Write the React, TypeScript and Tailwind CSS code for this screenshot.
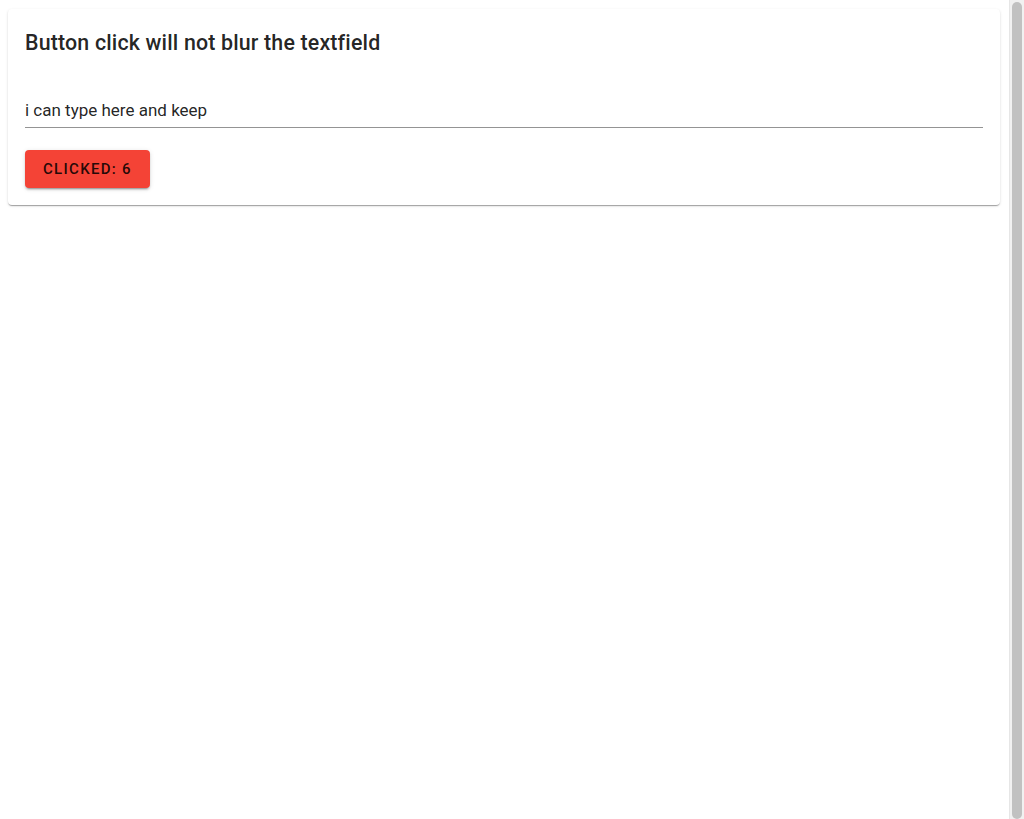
import React, { useState } from 'react';

const App: React.FC = () => {
  const [count, setCount] = useState(6);
  const [text, setText] = useState('i can type here and keep');

  return (
    <div className="h-[819px] flex overflow-hidden bg-white font-['Roboto',sans-serif]">
      <div className="flex-1 pt-[9px] pl-2 pr-[9px]">
        <div className="bg-white rounded px-[17px] pt-[17px] pb-[17px] shadow-[0_2px_1px_-1px_rgba(0,0,0,0.2),0_1px_1px_0_rgba(0,0,0,0.14),0_1px_3px_0_rgba(0,0,0,0.12)]">
          <h6 className="text-[21.4px] font-medium leading-[34px] tracking-[0.16px] text-[rgba(0,0,0,0.87)]">
            Button click will not blur the textfield
          </h6>
          <div className="mt-[33px] border-b border-[rgba(0,0,0,0.42)]">
            <input
              value={text}
              onChange={(e) => setText(e.target.value)}
              className="w-full bg-transparent outline-none text-[17px] leading-[25px] pt-[5px] pb-[4px] text-[rgba(0,0,0,0.87)]"
            />
          </div>
          <button
            onMouseDown={(e) => e.preventDefault()}
            onClick={() => setCount(count + 1)}
            className="mt-[22px] h-[38px] px-[18px] rounded bg-[#f44336] text-[15px] font-medium tracking-[1.3px] uppercase text-[rgba(0,0,0,0.87)] shadow-[0_3px_1px_-2px_rgba(0,0,0,0.2),0_2px_2px_0_rgba(0,0,0,0.14),0_1px_5px_0_rgba(0,0,0,0.12)]"
          >
            Clicked: {count}
          </button>
        </div>
      </div>
      <div className="w-[15px] bg-[#f1f1f1] border-l border-[#e6e6e6] px-[2px] pt-[2px]">
        <div className="h-full rounded-full bg-[#c1c1c1]" />
      </div>
    </div>
  );
};

export default App;
